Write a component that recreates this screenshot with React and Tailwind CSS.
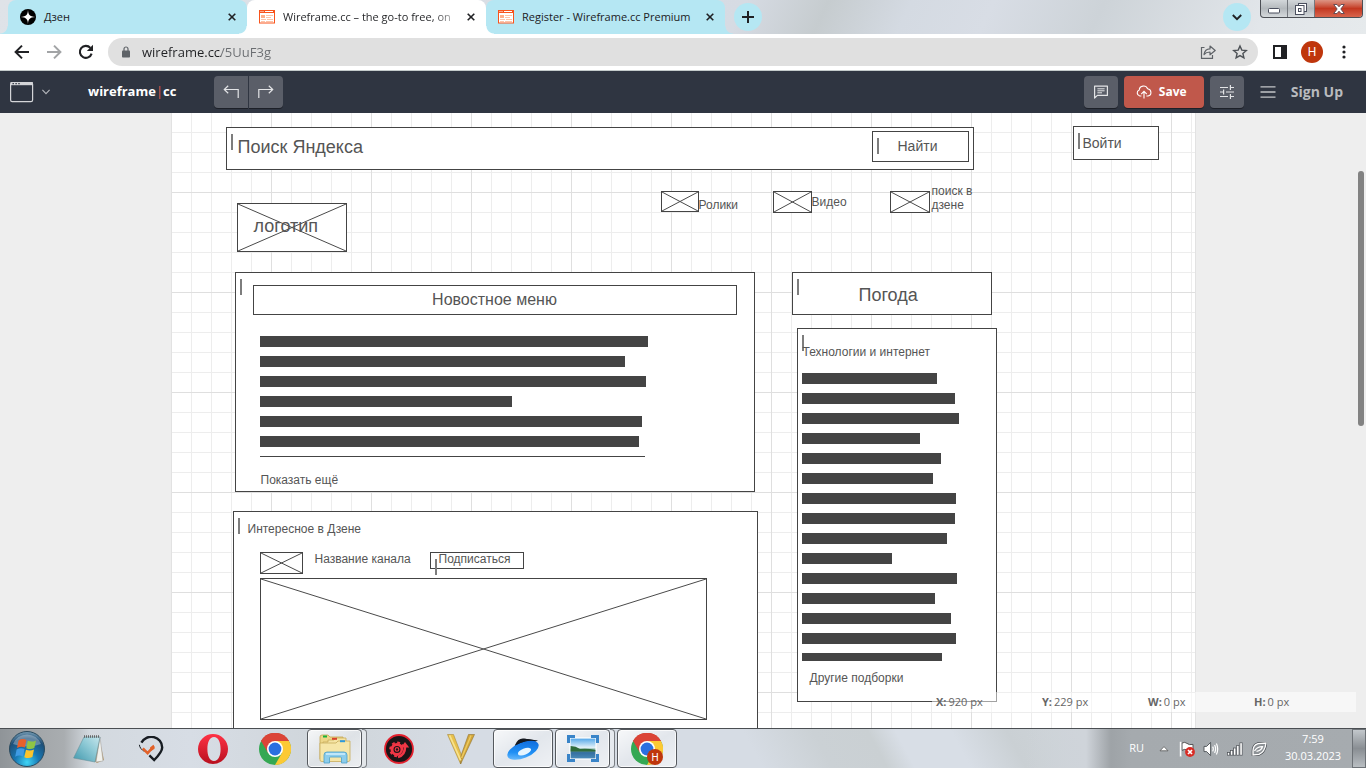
import React from "react";

const UI = "font-['Open_Sans','Noto_Sans',sans-serif]";

function SparkIcon() {
  return (
    <svg viewBox="0 0 16 16" className="size-4 shrink-0" aria-hidden="true">
      <circle cx="8" cy="8" r="8" fill="#000" />
      <path d="M8 0.6C8.2 5.6 9.4 7.6 15.4 8C9.4 8.4 8.2 10.4 8 15.4C7.8 10.4 6.6 8.4 0.6 8C6.6 7.6 7.8 5.6 8 0.6Z" fill="#fff" />
    </svg>
  );
}

function WireIcon() {
  return (
    <svg viewBox="0 0 16 14" className="h-3.5 w-4 shrink-0" aria-hidden="true">
      <rect x="0.5" y="0.5" width="15" height="12.5" fill="#fff" stroke="#f9541c" />
      <rect x="0" y="0" width="16" height="3" fill="#f9541c" />
      <path d="M1.5 1.5h1M3.5 1.5h1M6 1.5h8" stroke="#fff" />
      <rect x="2" y="5" width="4" height="3" fill="#fdb08c" />
      <path d="M7 5.5h7M7 7.5h5M2 9.5h5M8 9.5h6M2 11.5h4M7 11.5h7" stroke="#fdc4a8" />
    </svg>
  );
}

function CloseIcon() {
  return (
    <svg viewBox="0 0 8 8" className="size-2" aria-hidden="true">
      <path d="M0.7 0.7L7.3 7.3M7.3 0.7L0.7 7.3" stroke="#202124" strokeWidth="1.6" />
    </svg>
  );
}

function Tab({ icon, title, active, fade }) {
  const skin = active
    ? "z-10 bg-white before:bg-[radial-gradient(circle_at_0_0,transparent_7px,#fff_8px)] after:bg-[radial-gradient(circle_at_100%_0,transparent_7px,#fff_8px)]"
    : "bg-[#b5e7f3] before:bg-[radial-gradient(circle_at_0_0,transparent_7px,#b5e7f3_8px)] after:bg-[radial-gradient(circle_at_100%_0,transparent_7px,#b5e7f3_8px)]";
  return (
    <div className={`relative flex h-[34px] w-[239px] items-center rounded-t-lg pl-3 pr-[9px] before:absolute before:bottom-0 before:-left-2 before:size-2 after:absolute after:bottom-0 after:-right-2 after:size-2 ${skin}`}>
      {icon}
      <button type="button" className={`ml-2 h-full flex-1 whitespace-nowrap text-left text-[11px] ${fade ? "bg-linear-to-r from-[#202124] from-[150px] to-[#20212422] to-[176px] bg-clip-text text-transparent" : "text-[#202124]"}`}>
        {title}
      </button>
      <button type="button" aria-label="Закрыть" className="flex size-3 items-center justify-center">
        <CloseIcon />
      </button>
    </div>
  );
}

function WindowControls() {
  return (
    <div className="mr-[3px] flex h-[18px] self-start overflow-hidden rounded-b border border-t-0 border-[#4c4f55] bg-linear-to-b from-[#d3d7da] via-[#b4b9bd] to-[#d5d9dc]">
      <button type="button" aria-label="Свернуть" className="flex w-[27px] items-center justify-center border-r border-[#74787e]">
        <svg viewBox="0 0 12 6" className="mt-1 h-1.5 w-3"><rect x="0.5" y="0.5" width="11" height="4.5" rx="1" fill="#fff" stroke="#4a4f5e" /></svg>
      </button>
      <button type="button" aria-label="Свернуть в окно" className="flex w-[27px] items-center justify-center border-r border-[#74787e]">
        <svg viewBox="0 0 12 12" className="size-3">
          <rect x="3.5" y="0.5" width="8" height="8" fill="#fff" stroke="#4a4f5e" />
          <rect x="0.5" y="2.5" width="8.5" height="9" fill="#fff" stroke="#4a4f5e" />
          <rect x="3.5" y="5.5" width="2.5" height="3" fill="#fff" stroke="#4a4f5e" />
        </svg>
      </button>
      <button type="button" aria-label="Закрыть окно" className="flex w-[47px] items-center justify-center bg-linear-to-b from-[#dc9484] via-[#c33720] to-[#d8644c]">
        <svg viewBox="0 0 12 10" className="h-2.5 w-3">
          <path d="M0.7 0.5H4L6 2.8L8 0.5H11.3L7.8 5L11.3 9.5H8L6 7.2L4 9.5H0.7L4.2 5Z" fill="#fff" stroke="#5b4650" strokeWidth="0.9" />
        </svg>
      </button>
    </div>
  );
}

function TabStrip() {
  return (
    <div className="flex h-[34px] shrink-0 items-center bg-[linear-gradient(115deg,#dfe3e8_0%,#d6dbe3_54%,#c6cccf_60%,#d4dae2_66%,#d8dde5_72%,#cdd3d8_80%,#e2e6ea_92%,#e6eaec_100%)] pl-2">
      <Tab icon={<SparkIcon />} title="Дзен" />
      <Tab icon={<WireIcon />} title="Wireframe.cc – the go-to free, on" active fade />
      <Tab icon={<WireIcon />} title="Register - Wireframe.cc Premium" />
      <button type="button" aria-label="Новая вкладка" className="ml-[9px] flex size-7 items-center justify-center rounded-full bg-[#b5e7f3]">
        <svg viewBox="0 0 12 12" className="size-3"><path d="M6 0V12M0 6H12" stroke="#202124" strokeWidth="2" /></svg>
      </button>
      <div className="flex-1" />
      <button type="button" aria-label="Поиск вкладок" className="mr-[9px] flex size-7 items-center justify-center rounded-full bg-[#b5e7f3]">
        <svg viewBox="0 0 10 7" className="h-[7px] w-2.5"><path d="M0.8 1L5 5.2L9.2 1" fill="none" stroke="#202124" strokeWidth="1.9" /></svg>
      </button>
      <WindowControls />
    </div>
  );
}

function AddressRow() {
  return (
    <div className="flex h-[37px] shrink-0 items-center border-b border-[#c4cbcb] bg-white px-[14px]">
      <button type="button" aria-label="Назад" className="size-4">
        <svg viewBox="0 0 16 16" className="size-4"><path d="M15 8H2M8 1.6L1.6 8L8 14.4" fill="none" stroke="#202124" strokeWidth="2" /></svg>
      </button>
      <button type="button" aria-label="Вперёд" className="ml-4 size-4">
        <svg viewBox="0 0 16 16" className="size-4"><path d="M1 8H14M8 1.6L14.4 8L8 14.4" fill="none" stroke="#a2a4a6" strokeWidth="2" /></svg>
      </button>
      <button type="button" aria-label="Обновить" className="ml-4 size-4">
        <svg viewBox="0 0 16 16" className="size-4">
          <path d="M13.6 9.6A6 6 0 1 1 12.4 3.9" fill="none" stroke="#202124" strokeWidth="2.1" />
          <path d="M15 0.8V7H8.8Z" fill="#202124" />
        </svg>
      </button>
      <div className="ml-[14px] flex h-7 flex-1 items-center rounded-full bg-[#e0e0e0] pl-3.5 pr-2.5">
        <svg viewBox="0 0 8 12" className="h-3 w-2" aria-hidden="true">
          <path d="M2 5V3a2 2 0 0 1 4 0V5" fill="none" stroke="#5f6368" strokeWidth="1.2" />
          <rect x="0" y="4.6" width="8" height="7" rx="0.8" fill="#5f6368" />
        </svg>
        <input
          aria-label="Адрес"
          defaultValue="wireframe.cc/5UuF3g"
          className="ml-3 h-7 flex-1 bg-linear-to-r from-[#202124] from-[79px] to-[#6a6d71] to-[79px] bg-clip-text text-[13px] text-transparent outline-none"
        />
        <button type="button" aria-label="Поделиться" className="size-4">
          <svg viewBox="0 0 16 16" className="size-4" fill="none" stroke="#5f6368" strokeWidth="1.2">
            <path d="M4.5 3.5H1.5V14.4H12.5V11" />
            <path d="M4 10.5C4.6 6.8 6.6 5 10 4.9V2L15.2 6.5L10 10.8V8C7.2 8 5.4 8.8 4 10.5Z" strokeLinejoin="round" />
          </svg>
        </button>
        <button type="button" aria-label="Добавить в закладки" className="ml-4 size-4">
          <svg viewBox="0 0 16 16" className="size-4">
            <path d="M8 2L9.8 6.1L14.3 6.5L10.9 9.5L11.9 13.9L8 11.6L4.1 13.9L5.1 9.5L1.7 6.5L6.2 6.1Z" fill="none" stroke="#4d5156" strokeWidth="1.4" />
          </svg>
        </button>
      </div>
      <button type="button" aria-label="Боковая панель" className="ml-[15px] h-3.5 w-3.5">
        <svg viewBox="0 0 14 14" className="size-3.5"><rect x="1" y="1" width="12" height="12" fill="none" stroke="#202124" strokeWidth="2" /><rect x="8" y="0" width="6" height="14" fill="#202124" /></svg>
      </button>
      <button type="button" className="ml-[14px] flex size-[22px] items-center justify-center rounded-full bg-[#bf360c] font-['Roboto',sans-serif] text-xs text-white">H</button>
      <button type="button" aria-label="Меню" className="ml-[13px] flex w-4 justify-center">
        <svg viewBox="0 0 4 14" className="h-3.5 w-1" fill="#202124"><circle cx="2" cy="2" r="1.6" /><circle cx="2" cy="7" r="1.6" /><circle cx="2" cy="12" r="1.6" /></svg>
      </button>
    </div>
  );
}

const tool = "flex h-8 w-[34px] items-center justify-center bg-[#5a5e68] shadow-[0_1px_0_#1d2028]";

function AppHeader() {
  return (
    <header className="flex h-[42px] shrink-0 items-center bg-[#2f3541] pl-2.5 pr-[23px]">
      <button type="button" aria-label="Тип окна" className="flex items-center">
        <svg viewBox="0 0 24 22" className="h-[22px] w-6">
          <rect x="0.6" y="1.6" width="22" height="19" rx="1.6" fill="none" stroke="#d4d5d8" strokeWidth="1.2" />
          <path d="M0.6 1H22.8V4.2H0.6Z" fill="#d4d5d8" />
          <path d="M2.5 2.6h1.4M5.4 2.6h1.4M8.3 2.6h1.4" stroke="#2f3541" strokeWidth="1.3" />
        </svg>
        <svg viewBox="0 0 8 6" className="ml-2 h-1.5 w-2"><path d="M0.4 0.8L4 4.6L7.6 0.8" fill="none" stroke="#b5b7bc" strokeWidth="1.1" /></svg>
      </button>
      <a href="#home" className="ml-[38px] w-[126px] text-[13px] font-bold text-white">
        wireframe<span className="font-normal text-[#e2574c]">|</span>cc
      </a>
      <div className="flex gap-px">
        <button type="button" aria-label="Отменить" className={`${tool} rounded-l`}>
          <svg viewBox="0 0 16 14" className="h-3.5 w-4" fill="none" stroke="#e3e4e6" strokeWidth="1.2"><path d="M15.2 13V4.5H1.5M5.2 0.8L1.3 4.5L5.2 8.2" /></svg>
        </button>
        <button type="button" aria-label="Повторить" className={`${tool} rounded-r`}>
          <svg viewBox="0 0 16 14" className="h-3.5 w-4" fill="none" stroke="#e3e4e6" strokeWidth="1.2"><path d="M0.8 13V4.5H14.5M10.8 0.8L14.7 4.5L10.8 8.2" /></svg>
        </button>
      </div>
      <div className="flex-1" />
      <button type="button" aria-label="Комментарии" className={`${tool} rounded`}>
        <svg viewBox="0 0 14 14" className="size-3.5" fill="none" stroke="#e3e4e6" strokeWidth="1.2"><path d="M0.6 13V1.2H13.4V10.4H3.4Z" strokeLinejoin="round" /><path d="M3.4 3.8H10.6M3.4 5.8H10.6M3.4 7.8H8" strokeWidth="1" /></svg>
      </button>
      <button type="button" className="ml-1.5 flex h-8 w-20 items-center rounded bg-[#c0584b] pl-3 text-xs font-bold text-white shadow-[0_1px_0_#1d2028]">
        <svg viewBox="0 0 16 14" className="mr-[7px] h-3.5 w-4" fill="none" stroke="#fff" strokeWidth="1.1">
          <path d="M5.4 11H3.8A3.2 3.2 0 0 1 3.2 4.9A4.4 4.4 0 0 1 11.6 3.7A3.7 3.7 0 0 1 12 11H10.4" /><path d="M8 13.4V6.6M5.2 9.2L8 6.4L10.8 9.2" />
        </svg>
        Save
      </button>
      <button type="button" aria-label="Настройки" className={`${tool} ml-1.5 rounded`}>
        <svg viewBox="0 0 14 14" className="size-3.5" fill="none" stroke="#e3e4e6" strokeWidth="1.2">
          <path d="M0 2.5H8M10.4 2.5H14M10.4 0V5M0 7H3.6M3.6 4.6V9.4M6 7H14M0 11.5H8M10.4 11.5H14M10.4 9V14" />
        </svg>
      </button>
      <button type="button" aria-label="Меню" className="ml-4">
        <svg viewBox="0 0 16 12" className="h-3 w-4" stroke="#c3c5c8" strokeWidth="1.3"><path d="M0.5 0.9H15.5M0.5 6H15.5M0.5 11.1H15.5" /></svg>
      </button>
      <a href="#signup" className="ml-[15px] text-sm font-bold text-[#b9bbbe]">Sign Up</a>
    </header>
  );
}

/* ---- Shapes placed on the free drawing canvas ---- */

function Shape({ as: As = "div", className, caret, children }) {
  return (
    <As className={`absolute border border-[#444] bg-white text-left ${className}`}>
      {caret && <span className="absolute left-1 top-1.5 h-4 w-0.5 bg-[#7d7d7d]" />}
      {children}
    </As>
  );
}

function Placeholder({ className }) {
  return (
    <div className={`absolute border border-[#444] bg-white ${className}`}>
      <svg viewBox="0 0 100 100" preserveAspectRatio="none" className="block size-full" aria-hidden="true">
        <path d="M0 0L100 100M100 0L0 100" stroke="#4a4a4a" strokeWidth="1" vectorEffect="non-scaling-stroke" />
      </svg>
    </div>
  );
}

function Label({ className, children }) {
  return <span className={`absolute whitespace-pre text-[#555] ${className}`}>{children}</span>;
}

const newsLines = ["w-[388px]", "w-[365px]", "w-[386px]", "w-[252px]", "w-[382px]", "w-[379px]"];
const techLines = [
  "w-[135px]", "w-[153px]", "w-[157px]", "w-[118px]", "w-[139px]", "w-[131px]", "w-[154px]",
  "w-[153px]", "w-[145px]", "w-[90px]", "w-[155px]", "w-[133px]", "w-[149px]", "w-[154px]",
];

function TextLines({ widths, last, className }) {
  return (
    <div className={`absolute flex flex-col gap-[9px] ${className}`}>
      {widths.map((w, i) => <div key={i} className={`h-[11px] bg-[#444] ${w}`} />)}
      <div className={`bg-[#444] ${last}`} />
    </div>
  );
}

const small = "text-xs/[14px]";

function Canvas() {
  return (
    <main className="relative min-h-0 flex-1 overflow-hidden bg-[#eee]">
      <div className="relative mx-auto h-full w-[1025px] overflow-hidden border-x border-[#e2e2e2] bg-white bg-[linear-gradient(to_right,#dfdfdf_1px,transparent_1px),linear-gradient(to_bottom,#dfdfdf_1px,transparent_1px),linear-gradient(to_right,#ededed_1px,transparent_1px),linear-gradient(to_bottom,#ededed_1px,transparent_1px)] bg-size-[100px_100px,100px_100px,20px_20px,20px_20px] bg-position-[99px_0px,0px_79px,19px_0px,0px_19px] font-['Liberation_Sans',Arial,sans-serif]">
        <Shape caret className="left-[54px] top-3.5 h-[43px] w-[748px]" />
        <Label className="left-[66px] top-6 text-lg/5">Поиск Яндекса</Label>
        <Shape as="button" caret className="left-[700px] top-[18px] h-[31px] w-[97px]">
          <Label className="left-[25px] top-1.5 text-sm/4">Найти</Label>
        </Shape>
        <Shape as="button" caret className="left-[901px] top-[13px] h-[34px] w-[86px]">
          <Label className="left-[9px] top-2 text-sm/4">Войти</Label>
        </Shape>

        <Placeholder className="left-[65px] top-[90px] h-[49px] w-[110px]" />
        <Label className="left-[82px] top-[103px] text-lg/5">логотип</Label>

        <Placeholder className="left-[489px] top-[78px] h-[21px] w-[38px]" />
        <Label className={`left-[527px] top-[85px] ${small}`}>Ролики</Label>
        <Placeholder className="left-[601px] top-[78px] h-[22px] w-[39px]" />
        <Label className={`left-[640px] top-[82px] ${small}`}>Видео</Label>
        <Placeholder className="left-[718px] top-[78px] h-[22px] w-10" />
        <Label className={`left-[760px] top-[71px] ${small}`}>{"поиск в\nдзене"}</Label>

        <Shape caret className="left-[63px] top-[159px] h-[220px] w-[520px]">
          <div className="mx-[17px] mt-3 h-[30px] border border-[#444] text-center text-base/7 text-[#555]">Новостное меню</div>
        </Shape>
        <TextLines widths={newsLines} last="h-px w-[385px]" className="left-[88px] top-[223px]" />
        <Label className={`left-[89px] top-[360px] ${small}`}>Показать ещё</Label>

        <Shape caret className="left-[620px] top-[159px] h-[43px] w-[200px]">
          <Label className="left-[66px] top-3 text-lg/5">Погода</Label>
        </Shape>

        <Shape caret className="left-[625px] top-[215px] h-[374px] w-[200px]" />
        <Label className={`left-[631px] top-[232px] ${small}`}>Технологии и интернет</Label>
        <TextLines widths={techLines} last="h-2 w-[140px]" className="left-[630px] top-[260px]" />
        <Label className={`left-[638px] top-[558px] ${small}`}>Другие подборки</Label>

        <Shape caret className="left-[61px] top-[398px] h-[300px] w-[525px]" />
        <Label className={`left-[76px] top-[409px] ${small}`}>Интересное в Дзене</Label>
        <Placeholder className="left-[88px] top-[439px] h-[22px] w-[43px]" />
        <Label className={`left-[143px] top-[439px] ${small}`}>Название канала</Label>
        <Shape as="button" caret className="left-[258px] top-[439px] h-[17px] w-[94px]">
          <Label className={`left-2 -top-px ${small}`}>Подписаться</Label>
        </Shape>
        <Placeholder className="left-[88px] top-[465px] h-[142px] w-[447px]" />
      </div>

      <dl className="absolute bottom-4 right-2.5 flex h-5 items-center bg-white/50 text-[11px] text-[#666]">
        {[["X:", "920 px"], ["Y:", "229 px"], ["W:", "0 px"], ["H:", "0 px"]].map(([k, v]) => (
          <div key={k} className="flex w-[106px] gap-0.5 pl-1">
            <dt className="font-bold">{k}</dt>
            <dd>{v}</dd>
          </div>
        ))}
      </dl>
      <div className="absolute right-0.5 top-[58px] h-[255px] w-1.5 rounded-full bg-[#828282]" />
    </main>
  );
}

/* ---- Taskbar ---- */

function ChromeLogo({ badge }) {
  return (
    <svg viewBox="0 0 32 32" className="size-8">
      <circle cx="16" cy="16" r="16" fill="#34a853" />
      <path d="M16 16L2.1 8A16 16 0 0 1 29.9 8Z" fill="#db4437" />
      <path d="M2.1 8L9.1 20L16 16V8H29.9A16 16 0 0 0 2.1 8Z" fill="#db4437" />
      <path d="M29.9 8A16 16 0 0 1 16 32L22.9 20L16 16V8Z" fill="#fcc934" />
      <circle cx="16" cy="16" r="8" fill="#fff" />
      <circle cx="16" cy="16" r="6.4" fill="#2a6fe0" />
      {badge && (
        <>
          <circle cx="24" cy="24" r="8" fill="#bf360c" />
          <text x="24" y="27.6" textAnchor="middle" fontSize="10" fontFamily="Roboto, sans-serif" fill="#fff">H</text>
        </>
      )}
    </svg>
  );
}

function StartOrb() {
  return (
    <svg viewBox="0 0 36 36" className="size-9">
      <defs>
        <radialGradient id="orb" cx="50%" cy="88%" r="85%">
          <stop offset="0" stopColor="#3fd5f5" /><stop offset="0.4" stopColor="#1878b4" /><stop offset="0.8" stopColor="#1e4f78" /><stop offset="1" stopColor="#6c93ad" />
        </radialGradient>
      </defs>
      <circle cx="18" cy="18" r="17.5" fill="url(#orb)" stroke="#2a4a5e" />
      <path d="M4 13A15 15 0 0 1 32 13Q18 18 4 13Z" fill="#fff" opacity="0.3" />
      <path d="M9.5 9.5Q13.5 6.8 17.4 9L15.8 16.4Q12 14.6 8 17Z" fill="#e7602b" />
      <path d="M18.8 9.8Q23 11.6 27 9.4L25.3 17Q21.5 19 17.3 17.2Z" fill="#8fc545" />
      <path d="M7.6 18.4Q11.8 16.2 15.6 18L14 25.4Q10 23.4 6.2 25.8Z" fill="#3f9be4" />
      <path d="M17 18.7Q21 20.5 25 18.4L23.4 26Q19.4 28 15.3 26.2Z" fill="#fcc42c" />
    </svg>
  );
}

function NotepadIcon() {
  return (
    <svg viewBox="0 0 32 30" className="h-[30px] w-8">
      <defs><linearGradient id="pad" x1="0" y1="1" x2="1" y2="0"><stop offset="0" stopColor="#3f97ac" /><stop offset="0.6" stopColor="#8fcad6" /><stop offset="1" stopColor="#c6e6ec" /></linearGradient></defs>
      <path d="M26 3L31 26L24 29L21 27Z" fill="#b89d72" />
      <path d="M27 3L30 27L23 28Z" fill="#f1f1ec" stroke="#999" strokeWidth="0.5" />
      <path d="M11 3L27 3L22 28L0.6 24Z" fill="url(#pad)" stroke="#66919b" strokeWidth="0.6" />
      <path d="M11 2.5H27" stroke="#666" strokeWidth="2.4" strokeDasharray="1 1" />
    </svg>
  );
}

function DialIcon() {
  return (
    <svg viewBox="0 0 26 26" className="size-[26px]" fill="none">
      <path d="M3.4 6.6A11 10.6 0 0 1 24.2 11.4C24.2 15 21.6 18.4 16.2 24L11.4 19.4" stroke="#171c22" strokeWidth="2.4" />
      <path d="M1.4 8.8C1.6 11.6 3.6 13.8 6.4 15.4" stroke="#171c22" strokeWidth="1" />
      <path d="M4.8 12.4L9.6 17.2L16 10.2" stroke="#e2622a" strokeWidth="2.6" />
      <path d="M12 11.4L15.6 8.8L16.6 12.8L13.2 15Z" fill="#e2622a" />
    </svg>
  );
}

function OperaIcon() {
  return (
    <svg viewBox="0 0 30 30" className="size-[30px]">
      <defs><linearGradient id="op" x1="0" y1="0" x2="0" y2="1"><stop offset="0" stopColor="#ff3245" /><stop offset="1" stopColor="#b8101f" /></linearGradient></defs>
      <path fillRule="evenodd" d="M15 0A15 15 0 1 1 15 30A15 15 0 0 1 15 0ZM16 3C11.6 3 9.4 8.4 9.4 15S11.6 27 16 27S22.6 21.6 22.6 15S20.4 3 16 3Z" fill="url(#op)" />
    </svg>
  );
}

function FolderIcon() {
  return (
    <svg viewBox="0 0 34 30" className="h-[30px] w-[34px]">
      <path d="M2 3Q2 1 4 1H10L12 3H25V25H2Z" fill="#edd688" stroke="#c2a552" strokeWidth="0.8" />
      <path d="M10 6H16L18 4H28V26H5V8H10Z" fill="#f5e4a4" stroke="#c8ac5c" strokeWidth="0.8" />
      <path d="M2 9H18L20 7H32V26Q32 27.5 30 27.5H4Q2 27.5 2 26Z" fill="#f6e6a8" stroke="#c8ac5c" strokeWidth="0.8" />
      <path d="M5 2.5h4" stroke="#17b43a" strokeWidth="2" /><path d="M14 4.8h5" stroke="#d9412c" strokeWidth="2" /><path d="M22 7.2h5" stroke="#2d99db" strokeWidth="2" />
      <path d="M6 29V21Q6 18 9 18H26Q29 18 29 21V29H23.5V24Q23.5 23 22.5 23H12.5Q11.5 23 11.5 24V29Z" fill="#8ccdec" stroke="#4d9fc9" strokeWidth="0.8" />
      <path d="M8 20H27" stroke="#d8f2ff" strokeWidth="1.4" />
    </svg>
  );
}

function GearIcon() {
  return (
    <svg viewBox="0 0 30 30" className="size-[30px]">
      <circle cx="15" cy="15" r="14" fill="#1b1517" stroke="#e3202d" strokeWidth="1.8" />
      <circle cx="13" cy="15.4" r="5" fill="none" stroke="#f03645" strokeWidth="3" />
      <circle cx="13" cy="15.4" r="6.8" fill="none" stroke="#f03645" strokeWidth="2" strokeDasharray="2.8 2.54" />
      <circle cx="13" cy="15.4" r="1.8" fill="none" stroke="#f03645" strokeWidth="1.2" />
      <path d="M15 23.5Q22 21 21.4 12" fill="none" stroke="#1b1517" strokeWidth="4.4" />
      <path d="M14 23Q21 21 21 13" fill="none" stroke="#f03645" strokeWidth="2.6" />
      <path d="M16.8 13.4L21 8L25.2 13.4Z" fill="#f03645" />
    </svg>
  );
}

function VIcon() {
  return (
    <svg viewBox="0 0 28 30" className="h-[30px] w-7">
      <path d="M0.5 0.5H6.5L14.4 21L13.6 30Z" fill="#e8c14c" stroke="#a98a3a" strokeWidth="0.6" />
      <path d="M21.5 0.5H27.5L13.6 30L14.2 21Z" fill="#d3a63a" stroke="#8f7433" strokeWidth="0.6" />
      <path d="M2.6 1.4L13.8 26.4" stroke="#f7e28e" strokeWidth="1.6" />
      <path d="M24 1.4L14.6 24" stroke="#eccb62" strokeWidth="1.4" />
    </svg>
  );
}

function DiskIcon() {
  return (
    <svg viewBox="0 0 34 24" className="h-6 w-[34px]">
      <defs><linearGradient id="disk" x1="0" y1="1" x2="1" y2="0"><stop offset="0" stopColor="#8fd0ff" /><stop offset="0.4" stopColor="#2090f5" /><stop offset="1" stopColor="#0b62d6" /></linearGradient></defs>
      <path d="M9 8Q12 1.4 17 1.6L32 3.4Q20 8 8 15Z" fill="#14181f" />
      <ellipse cx="17" cy="13.2" rx="16.6" ry="7.8" transform="rotate(-22 17 13.2)" fill="url(#disk)" />
      <path d="M10 8Q14 1 19 1.8L31 3.4Q20 2.6 10 8Z" fill="#14181f" />
      <ellipse cx="18.5" cy="14.6" rx="7" ry="3.2" transform="rotate(-22 18.5 14.6)" fill="#e6f5ff" />
    </svg>
  );
}

function PhotoIcon() {
  return (
    <svg viewBox="0 0 32 28" className="h-7 w-8">
      <defs><linearGradient id="sky" x1="0" y1="0" x2="0" y2="1"><stop offset="0" stopColor="#4ca3e8" /><stop offset="0.45" stopColor="#e2f1f9" /><stop offset="0.55" stopColor="#7fae9f" /><stop offset="0.7" stopColor="#346fa0" /><stop offset="1" stopColor="#4d8dba" /></linearGradient></defs>
      <rect x="3" y="3" width="26" height="21" fill="url(#sky)" stroke="#fff" strokeWidth="1.2" />
      <path d="M3.6 11Q9 11 13 14Q20 13 28.4 15V16.4H3.6Z" fill="#2f6b3b" />
      <path d="M1.5 8V1.5H8M24 1.5H30.5V8M30.5 19V25.5H24M8 25.5H1.5V19" fill="none" stroke="#3984c8" strokeWidth="3" />
    </svg>
  );
}

function TaskItem({ label, open, stacked, children }) {
  const frame = "border border-[#55595e] bg-linear-to-br from-white/80 via-white/30 to-white/60 shadow-[inset_0_0_0_1px_rgba(255,255,255,0.7)]";
  return (
    <div className="flex h-full w-[60px]">
      <button type="button" aria-label={label} className={`flex h-full flex-1 items-center justify-center rounded-sm ${open ? frame : ""}`}>
        {children}
      </button>
      {stacked && <div className="h-full w-[5px] rounded-r-sm border border-l-0 border-[#7b7f84] bg-white/40" />}
    </div>
  );
}

function Taskbar() {
  return (
    <footer className="flex h-10 shrink-0 items-center gap-0.5 border-t border-[#4a4e52] bg-[linear-gradient(to_right,#8f9498_0px,#a3a7aa_40px,#a9adb0_64px,#d3d9df_90px,#d7dde5_190px,#cfd5da_330px,#d6dce4_460px,#d6dce4_610px,transparent_700px),linear-gradient(to_left,#a6abaf_0px,#a5aaae_235px,#9ea3a7_255px,#cfd4da_280px,transparent_340px),linear-gradient(62deg,#d6dce4_55%,#cbd1d5_60%,#cad0d3_64%,#d8dee6_66%,#d8dee6_70%,#cad0d4_74%,#cfd5da_80%)]">
      <button type="button" aria-label="Пуск" className="flex w-[57px] pl-[9px]"><StartOrb /></button>
      <TaskItem label="Блокнот"><NotepadIcon /></TaskItem>
      <TaskItem label="Монитор"><DialIcon /></TaskItem>
      <TaskItem label="Opera"><OperaIcon /></TaskItem>
      <TaskItem label="Chrome"><ChromeLogo /></TaskItem>
      <TaskItem label="Проводник" open stacked><FolderIcon /></TaskItem>
      <TaskItem label="Драйверы"><GearIcon /></TaskItem>
      <TaskItem label="V"><VIcon /></TaskItem>
      <TaskItem label="Диск" open><DiskIcon /></TaskItem>
      <TaskItem label="Изображения" open stacked><PhotoIcon /></TaskItem>
      <TaskItem label="Chrome H" open><ChromeLogo badge /></TaskItem>
      <div className="flex-1" />
      <div className="flex h-full items-center text-[11px] text-white">
        <span className="mr-[15px]">RU</span>
        <button type="button" aria-label="Скрытые значки" className="mr-2.5">
          <svg viewBox="0 0 10 6" className="h-1.5 w-2.5"><path d="M5 0.6L9 4.8H1Z" fill="#fff" stroke="#555" strokeWidth="0.8" /></svg>
        </button>
        <svg viewBox="0 0 16 16" className="mr-2 size-4">
          <path d="M1.5 1V15.5M3 2Q6 0.5 8 2.4T14 3.4V10Q10 10.5 8 9T3 9.4Z" fill="#fff" stroke="#555" strokeWidth="1" />
          <path d="M1.6 0.8V15.6" stroke="#fff" strokeWidth="1.6" />
          <circle cx="11" cy="11" r="4.9" fill="#d92c25" /><path d="M9 9L13 13M13 9L9 13" stroke="#fff" strokeWidth="1.7" />
        </svg>
        <svg viewBox="0 0 16 16" className="mr-2 size-4">
          <path d="M1 5.4H3.6L7.6 1.4V14.6L3.6 10.6H1Z" fill="#fff" stroke="#4b4f54" strokeWidth="0.9" />
          <path d="M9.6 5.6Q11 8 9.6 10.4M11.6 4Q13.6 8 11.6 12M13.4 2.6Q16 8 13.4 13.4" fill="none" stroke="#fff" strokeWidth="1.2" />
        </svg>
        <svg viewBox="0 0 16 14" className="mr-2 h-3.5 w-4" fill="#fff" stroke="#4b4f54" strokeWidth="0.7">
          <rect x="0.4" y="10.6" width="2.3" height="2.6" /><rect x="3.5" y="8.4" width="2.3" height="4.8" /><rect x="6.6" y="6" width="2.3" height="7.2" /><rect x="9.7" y="3.4" width="2.3" height="9.8" /><rect x="12.9" y="0.8" width="2.3" height="12.4" />
        </svg>
        <svg viewBox="0 0 16 14" className="mr-4 h-3.5 w-4" fill="none">
          <path d="M2 9Q2 3 7 1.6L15 1Q14 10 8 12.4L2 13Z" stroke="#4b4f54" strokeWidth="2.6" />
          <path d="M2 9Q2 3 7 1.6L15 1Q14 10 8 12.4L2 13Z" fill="#8d9296" stroke="#fff" strokeWidth="1.3" />
          <path d="M3.5 9Q6 4.5 11.5 4.6Q10.5 8.5 5.5 9.4" stroke="#fff" strokeWidth="1.3" />
        </svg>
        <div className="mr-[9px] w-[60px] whitespace-nowrap pb-1 text-center text-[11px]/[17px]">
          <div>7:59</div>
          <div>30.03.2023</div>
        </div>
        <button type="button" aria-label="Показать рабочий стол" className="h-full w-3.5 border border-[#6d7277] bg-linear-to-b from-[#c3c8cc] via-[#898e93] to-[#b9bec2]" />
      </div>
    </footer>
  );
}

export default function App() {
  return (
    <div className={`flex h-screen flex-col overflow-hidden ${UI}`}>
      <TabStrip />
      <AddressRow />
      <AppHeader />
      <Canvas />
      <Taskbar />
    </div>
  );
}
